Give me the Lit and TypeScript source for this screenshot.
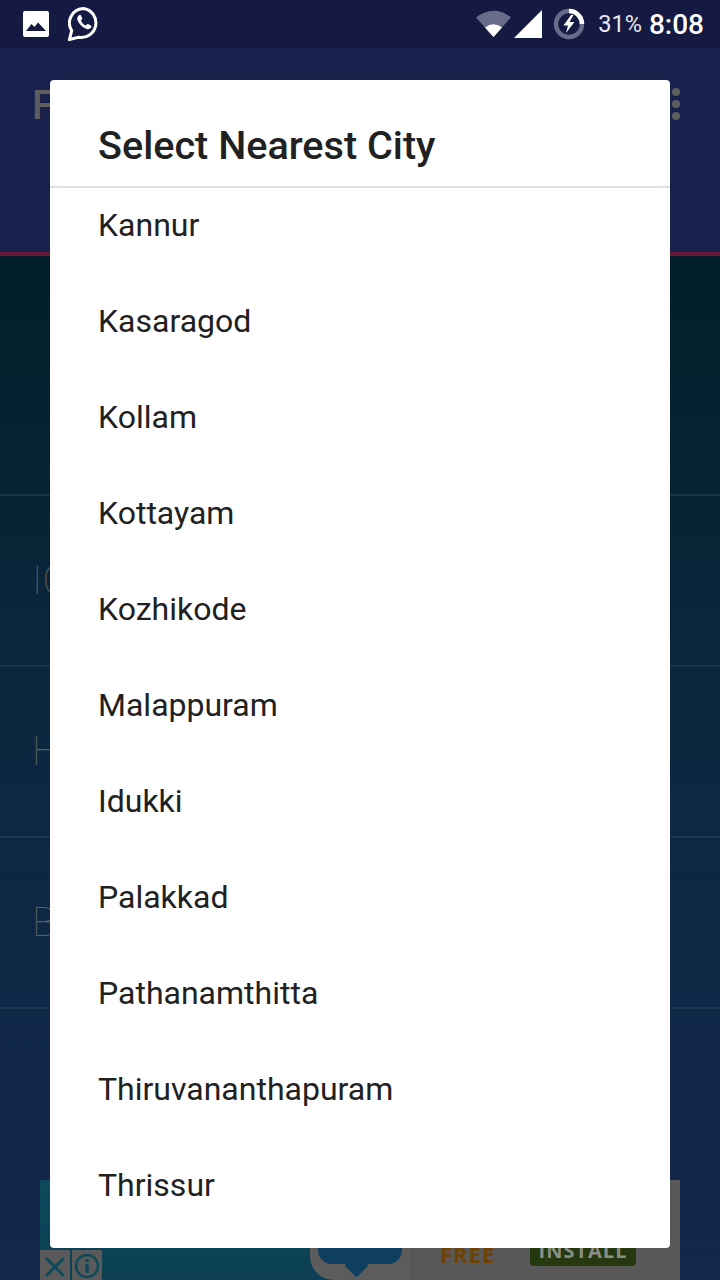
import { LitElement, html, css } from "lit";
import { customElement } from "lit/decorators.js";

const cities = [
  "Kannur",
  "Kasaragod",
  "Kollam",
  "Kottayam",
  "Kozhikode",
  "Malappuram",
  "Idukki",
  "Palakkad",
  "Pathanamthitta",
  "Thiruvananthapuram",
  "Thrissur",
];

@customElement("app-root")
export class AppRoot extends LitElement {
  static styles = css`
    :host {
      display: block;
      width: 720px;
      height: 1280px;
      overflow: hidden;
      font-family: Roboto, "Liberation Sans", sans-serif;
    }

    .page {
      position: relative;
      width: 720px;
      height: 1280px;
      display: flex;
      flex-direction: column;
      overflow: hidden;
    }

    .status-bar {
      height: 48px;
      flex: none;
      background: #141a42;
      display: flex;
      align-items: center;
      color: #fff;
    }

    .status-left {
      display: flex;
      align-items: center;
      gap: 19px;
      padding-left: 23px;
    }

    .status-right {
      margin-left: auto;
      display: flex;
      align-items: center;
      padding-right: 16px;
    }

    .signal {
      margin-left: 1px;
    }

    .ring {
      margin-left: 10px;
    }

    .battery-text {
      font-size: 23.5px;
      margin-left: 13px;
      color: #e8e9ee;
    }

    .clock {
      font-size: 28px;
      font-weight: 500;
      margin-left: 7px;
    }

    .app-bar {
      height: 208px;
      flex: none;
      box-sizing: border-box;
      background: #18204c;
      border-bottom: 4px solid #661a3c;
      display: flex;
      align-items: flex-start;
      justify-content: space-between;
      padding: 32px 40px 0 32px;
      color: #5e5e5e;
    }

    .app-letter {
      font-size: 40px;
      font-weight: 500;
      line-height: 52px;
    }

    .dots {
      display: flex;
      flex-direction: column;
      gap: 4px;
      padding-top: 8px;
    }

    .dots span {
      width: 8px;
      height: 8px;
      border-radius: 50%;
      background: #5e5e5e;
    }

    .content {
      flex: 1;
      background: linear-gradient(#021e28, #0b2840 45%, #13264c);
      padding-top: 238px;
      position: relative;
    }

    .content-row {
      height: 171px;
      box-sizing: border-box;
      border-top: 2px solid rgba(255, 255, 255, 0.07);
      padding-left: 32px;
      display: flex;
      align-items: center;
      color: #5e5e5e;
      font-size: 40px;
      font-weight: 100;
    }

    .content-row:last-of-type {
      height: 2px;
    }

    .ad {
      position: absolute;
      left: 40px;
      top: 924px;
      width: 640px;
      height: 100px;
      background: linear-gradient(#0b4a5c, #0c3f54);
      overflow: hidden;
    }

    .ad-panel {
      position: absolute;
      left: 270px;
      top: 0;
      width: 370px;
      height: 100px;
      background: linear-gradient(90deg, #5c5c5c 100px, #585858 100px);
      border-radius: 0 0 0 24px;
    }

    .ad-close,
    .ad-info {
      position: absolute;
      top: 70px;
      width: 30px;
      height: 30px;
      background: #5a5a5a;
    }

    .ad-close {
      left: 0;
    }

    .ad-info {
      left: 32px;
    }

    .ad-bubble {
      position: absolute;
      left: 278px;
      top: 40px;
      width: 84px;
      height: 44px;
      border-radius: 14px;
      background: #0e3f5e;
    }

    .ad-bubble::after {
      content: "";
      position: absolute;
      left: 30px;
      top: 37px;
      width: 17px;
      height: 17px;
      background: #0e3f5e;
      transform: rotate(45deg);
    }

    .ad-free {
      position: absolute;
      left: 400px;
      top: 59px;
      font-family: "Open Sans", sans-serif;
      font-size: 22px;
      line-height: 30px;
      font-weight: 700;
      color: #6e4206;
      letter-spacing: 1px;
    }

    .ad-install {
      position: absolute;
      left: 490px;
      top: 52px;
      width: 106px;
      height: 34px;
      border-radius: 4px;
      background: #26380f;
      color: #8a8f86;
      font-family: "Open Sans", sans-serif;
      font-size: 20px;
      font-weight: 700;
      letter-spacing: 1px;
      text-align: center;
      line-height: 38px;
    }

    .dialog {
      position: absolute;
      left: 50px;
      top: 80px;
      width: 620px;
      height: 1168px;
      background: #fff;
      border-radius: 4px;
      display: flex;
      flex-direction: column;
      overflow: hidden;
      color: #212121;
    }

    .dialog-title {
      height: 108px;
      flex: none;
      box-sizing: border-box;
      padding: 43px 48px 0;
      font-size: 39.6px;
      font-weight: 500;
      line-height: 46px;
      border-bottom: 2px solid #e0e0e0;
    }

    .list {
      flex: 1;
      overflow: hidden;
      margin-top: -11px;
    }

    .city {
      height: 96px;
      padding-left: 48px;
      display: flex;
      align-items: center;
      font-size: 32px;
    }
  `;

  render() {
    return html`
      <div class="page">
        <div class="status-bar">
          <div class="status-left">
            <svg width="26" height="26" viewBox="0 0 26 26">
              <rect width="26" height="26" rx="2" fill="#fff" />
              <path d="M3 20 L8.5 13 L11.5 16 L15 11.5 L23 20 Z" fill="#141a42" />
            </svg>
            <svg width="32" height="34" viewBox="0 0 32 34">
              <path
                d="M16 1.5a14.5 14.5 0 0 0-12.3 22.2L1.5 32.5l9-2.2A14.5 14.5 0 1 0 16 1.5z"
                fill="none"
                stroke="#fff"
                stroke-width="3"
              />
              <path
                d="M11.2 8.2c-1.6 1-2.4 2.6-1.8 4.6 1.2 3.8 5.2 8 9.2 9.2 2 .6 3.8-.2 4.8-2 .2-.5.1-.9-.3-1.2l-3-1.8c-.4-.2-.8-.1-1.1.2l-1 1.3c-2.4-.8-4.3-2.8-5.1-5.2l1.2-1c.3-.3.4-.7.2-1.1l-1.5-3c-.3-.5-.9-.6-1.6-.2z"
                fill="#fff"
              />
            </svg>
          </div>
          <div class="status-right">
            <svg width="36" height="30" viewBox="0 0 36 30">
              <path d="M0 8.5 Q18 -5 35 8.5 L17.5 28 Z" fill="#696c88" />
              <path d="M9 18.5 Q17.5 12 26 18.5 L17.5 28 Z" fill="#fff" />
            </svg>
            <svg class="signal" width="30" height="30" viewBox="0 0 30 30">
              <path d="M1 29 L29 1 V29 Z" fill="#fff" />
            </svg>
            <svg class="ring" width="32" height="32" viewBox="0 0 32 32">
              <circle cx="16" cy="16" r="13" fill="none" stroke="#696c88" stroke-width="4.5" />
              <path d="M16 3 A13 13 0 0 1 29 16" fill="none" stroke="#fff" stroke-width="4.5" />
              <path d="M18 7 L10.5 17.5 H15 L13 25 L21.5 14 H16.5 L20.5 7 Z" fill="#fff" />
            </svg>
            <span class="battery-text">31%</span>
            <span class="clock">8:08</span>
          </div>
        </div>
        <div class="app-bar">
          <span class="app-letter">F</span>
          <div class="dots"><span></span><span></span><span></span></div>
        </div>
        <div class="content">
          <div class="content-row">IC</div>
          <div class="content-row">H</div>
          <div class="content-row">B</div>
          <div class="content-row"></div>
          <div class="ad">
            <div class="ad-panel"></div>
            <div class="ad-close">
              <svg width="30" height="30" viewBox="0 0 30 30">
                <path d="M6 8 L24 26 M24 8 L6 26" stroke="#0c4a5a" stroke-width="3" fill="none" />
              </svg>
            </div>
            <div class="ad-info">
              <svg width="30" height="30" viewBox="0 0 30 30">
                <circle cx="15" cy="16" r="11" stroke="#0c4a5a" stroke-width="2.5" fill="none" />
                <path d="M15 14 V23 M15 9 V12" stroke="#0c4a5a" stroke-width="3.5" fill="none" />
              </svg>
            </div>
            <div class="ad-bubble"></div>
            <div class="ad-free">FREE</div>
            <div class="ad-install">INSTALL</div>
          </div>
        </div>
        <div class="dialog">
          <div class="dialog-title">Select Nearest City</div>
          <div class="list">
            ${cities.map((c) => html`<div class="city">${c}</div>`)}
          </div>
        </div>
      </div>
    `;
  }
}
